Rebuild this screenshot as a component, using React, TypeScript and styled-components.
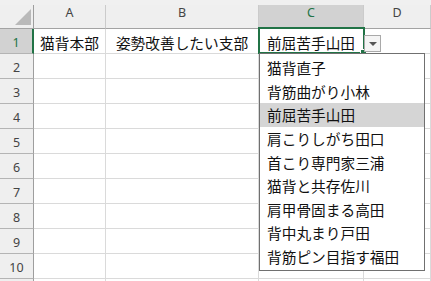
import React from 'react';
import styled, { createGlobalStyle } from 'styled-components';

const GREEN = '#217346';

const GlobalStyle = createGlobalStyle`
  html, body {
    margin: 0;
    padding: 0;
    width: 431px;
    height: 281px;
    overflow: hidden;
    background: #ffffff;
  }
  * {
    box-sizing: border-box;
  }
`;

const Page = styled.div`
  position: relative;
  width: 431px;
  height: 281px;
  overflow: hidden;
  font-family: 'Noto Sans CJK JP', 'Noto Sans', sans-serif;
`;

const TopStrip = styled.div`
  height: 5px;
  background: #f0f0f0;
`;

const Sheet = styled.div`
  display: grid;
  grid-template-columns: 34px 72px 153px 105px 1fr;
  grid-template-rows: 24px repeat(11, 25px);
`;

const Corner = styled.div`
  position: relative;
  background: #efefef;
  border-right: 1px solid #9e9e9e;
  border-bottom: 1px solid #a3a3a3;
`;

const CornerMark = styled.svg`
  position: absolute;
  left: 15px;
  top: 4px;
`;

const ColHead = styled.div<{ $active?: boolean }>`
  display: flex;
  justify-content: center;
  align-items: flex-start;
  background: ${(p) => (p.$active ? '#d2d2d2' : '#efefef')};
  border-right: 1px solid #cbcbcb;
  border-bottom: ${(p) => (p.$active ? `2px solid ${GREEN}` : '1px solid #a3a3a3')};
  color: ${(p) => (p.$active ? GREEN : '#444444')};
  font-family: 'Noto Sans', sans-serif;
  font-size: 12.5px;
  line-height: 15px;
`;

const RowHead = styled.div<{ $active?: boolean }>`
  display: flex;
  justify-content: center;
  align-items: center;
  padding-top: 2px;
  background: ${(p) => (p.$active ? '#d2d2d2' : '#efefef')};
  border-right: ${(p) => (p.$active ? `2px solid ${GREEN}` : '1px solid #9e9e9e')};
  border-bottom: 1px solid #b4b4b4;
  color: ${(p) => (p.$active ? GREEN : '#444444')};
  font-family: 'Noto Sans', sans-serif;
  font-size: 12.5px;
`;

const Cell = styled.div`
  display: flex;
  justify-content: center;
  align-items: center;
  padding-top: 2px;
  border-right: 1px solid #dadada;
  border-bottom: 1px solid #dadada;
  color: #111111;
  font-size: 14.7px;
  white-space: nowrap;
  overflow: hidden;
`;

const Selection = styled.div`
  position: absolute;
  left: 258px;
  top: 27px;
  width: 107px;
  height: 27px;
  border: 2px solid ${GREEN};
`;

const FillHandle = styled.div`
  position: absolute;
  left: 360px;
  top: 49px;
  width: 7px;
  height: 7px;
  background: ${GREEN};
  border: 1px solid #ffffff;
`;

const DropButton = styled.div`
  position: absolute;
  left: 364px;
  top: 35px;
  width: 17px;
  height: 17px;
  display: flex;
  justify-content: center;
  align-items: center;
  background: #f4f4f4;
  border: 1px solid #a9a9a9;
`;

const Arrow = styled.div`
  width: 0;
  height: 0;
  border-left: 4px solid transparent;
  border-right: 4px solid transparent;
  border-top: 4px solid #555555;
`;

const DropList = styled.ul`
  position: absolute;
  left: 259px;
  top: 53px;
  width: 166px;
  height: 218px;
  margin: 0;
  padding: 2px 0;
  list-style: none;
  background: #ffffff;
  border: 1px solid #707070;
`;

const Option = styled.li<{ $hover?: boolean }>`
  height: 23.6px;
  display: flex;
  align-items: center;
  padding-left: 7px;
  background: ${(p) => (p.$hover ? '#d5d5d5' : 'transparent')};
  color: #111111;
  font-size: 14.7px;
  white-space: nowrap;
`;

const columns = ['A', 'B', 'C', 'D'];
const firstRow = ['猫背本部', '姿勢改善したい支部', '前屈苦手山田', ''];
const options = [
  '猫背直子',
  '背筋曲がり小林',
  '前屈苦手山田',
  '肩こりしがち田口',
  '首こり専門家三浦',
  '猫背と共存佐川',
  '肩甲骨固まる高田',
  '背中丸まり戸田',
  '背筋ピン目指す福田',
];

export default function App() {
  // 10 numbered rows, plus the sliver of row 11 at the bottom edge
  const rows = Array.from({ length: 11 }, (_, i) => i + 1);

  return (
    <Page>
      <GlobalStyle />
      <TopStrip />
      <Sheet>
        <Corner>
          <CornerMark width="16" height="16" viewBox="0 0 16 16">
            <polygon points="16,0 16,16 0,16" fill="#b9b9b9" />
          </CornerMark>
        </Corner>
        {columns.map((c) => (
          <ColHead key={c} $active={c === 'C'}>
            {c}
          </ColHead>
        ))}
        {rows.map((r) => (
          <React.Fragment key={r}>
            <RowHead $active={r === 1}>{r <= 10 ? r : ''}</RowHead>
            {columns.map((c, ci) => (
              <Cell key={c}>{r === 1 ? firstRow[ci] : ''}</Cell>
            ))}
          </React.Fragment>
        ))}
      </Sheet>

      <Selection />
      <FillHandle />
      <DropButton>
        <Arrow />
      </DropButton>
      <DropList>
        {options.map((o, i) => (
          <Option key={o} $hover={i === 2}>
            {o}
          </Option>
        ))}
      </DropList>
    </Page>
  );
}
